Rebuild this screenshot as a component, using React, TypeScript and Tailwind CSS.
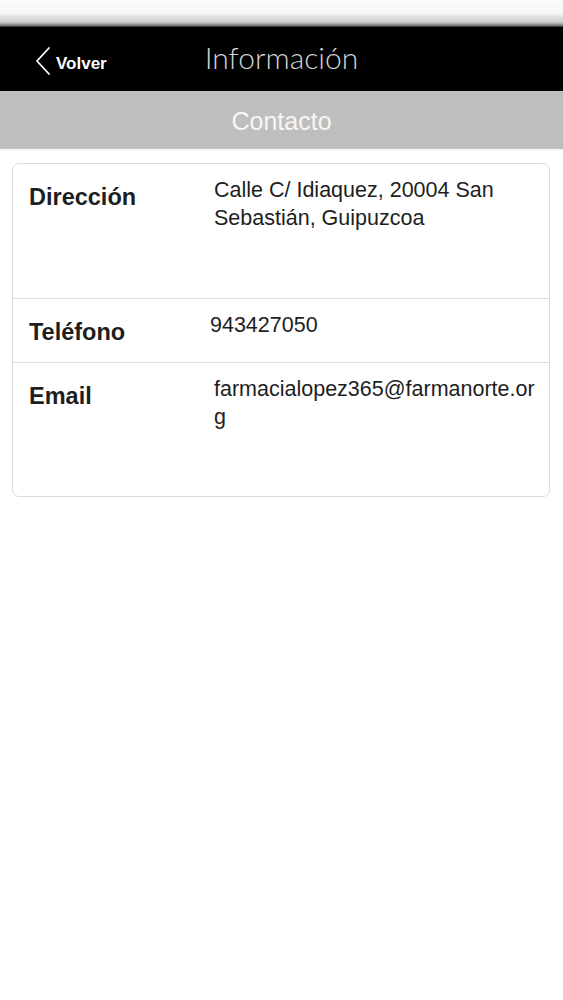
import React from "react";

const rows = [
  { label: "Dirección", value: "Calle C/ Idiaquez, 20004 San Sebastián, Guipuzcoa", h: "h-[135px]", shift: "" },
  { label: "Teléfono", value: "943427050", h: "h-[64px]", shift: "-ml-[4px]" },
  { label: "Email", value: "farmacialopez365@farmanorte.org", h: "h-[133px]", shift: "" },
];

export default function App() {
  return (
    <div className="w-[563px] min-h-[1000px] bg-white font-['Liberation_Sans',Arial,sans-serif]">
      <div className="h-[27px] bg-[linear-gradient(to_bottom,#fbfbfb_0px,#f6f6f6_13px,#e2e2e2_17px,#cfcfcf_22px,#8a8a8a_25px,#2a2a2a_27px)]" />
      <div className="h-[64px] bg-black flex items-center relative">
        <div className="absolute left-[34px] top-0 h-full flex items-center gap-[4px]">
          <svg width="18" height="30" viewBox="0 0 18 30" className="mt-[4px]">
            <path d="M15 2 L3 15 L15 28" fill="none" stroke="white" strokeWidth="1.8" strokeLinecap="round" strokeLinejoin="round" />
          </svg>
          <span className="text-white font-bold text-[17px] mt-[9px]">Volver</span>
        </div>
        <div className="flex-1 text-center text-[#d4d4d4] text-[30px] font-['Lato',sans-serif] font-light mt-[-4px]">
          Información
        </div>
      </div>
      <div className="h-[58px] bg-[#bfbebd] flex items-center justify-center">
        <span className="text-[#f6f6f6] text-[25px] leading-none mt-[2px]">Contacto</span>
      </div>
      <div className="h-[2px] bg-[#f7f7f7]" />
      <div className="mt-[12px] ml-[12px] w-[538px] border border-[#dcdcdc] rounded-[7px] overflow-hidden">
        {rows.map((r, i) => (
          <div key={r.label} className={`${r.h} flex ${i < rows.length - 1 ? "border-b border-[#dedede]" : ""}`}>
            <div className="w-[201px] pl-[16px] pt-[19px] text-[23.5px] font-bold leading-[28px] text-[#1e1e1e]">
              {r.label}
            </div>
            <div className={`w-[326px] pt-[12px] text-[21.5px] leading-[28px] text-[#1e1e1e] break-words ${r.shift}`}>
              {r.value}
            </div>
          </div>
        ))}
      </div>
    </div>
  );
}
